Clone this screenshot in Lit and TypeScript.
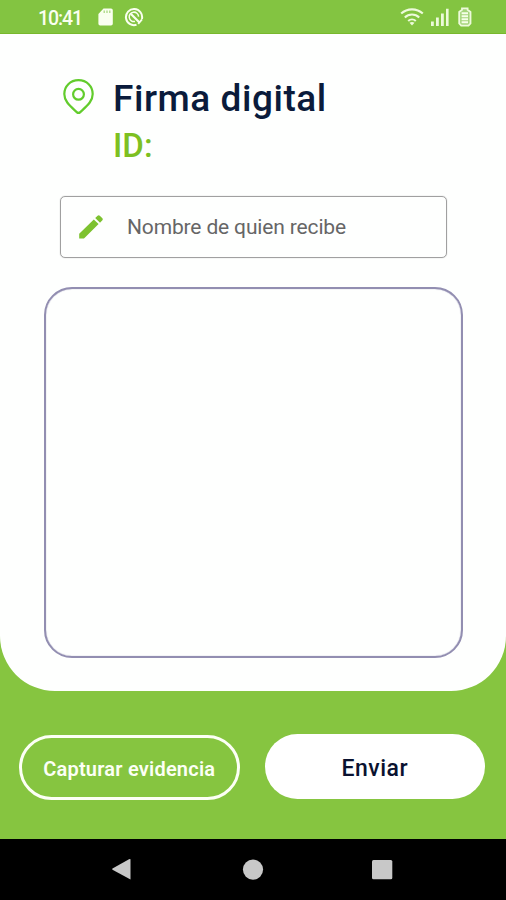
import { LitElement, html, css, svg } from "lit";
import { customElement } from "lit/decorators.js";

@customElement("status-bar")
class StatusBar extends LitElement {
  static styles = css`
    :host { display: flex; align-items: center; justify-content: space-between; box-sizing: border-box; height: 34px; padding: 1px 34px 0 38px; background: #83c441; border-bottom: 1px solid #78b82c; color: #fafff0; }
    .left, .right { display: flex; align-items: center; }
    .clock { font: 500 19.5px/24px Roboto, sans-serif; letter-spacing: -1.1px; width: 59px; margin-top: 3px; }
    svg { display: block; }
    .lens { margin-left: 10px; }
    .signal { margin-left: 7px; }
    .battery { margin-left: 9px; }
  `;
  render() {
    return html`
      <div class="left">
        <span class="clock">10:41</span>
        <svg width="17" height="20" viewBox="0 0 17 20">
          <path d="M6.5 1.5H14a1.8 1.8 0 0 1 1.8 1.8v13.4a1.8 1.8 0 0 1-1.8 1.8H3.2a1.8 1.8 0 0 1-1.8-1.8V7z" fill="#fafff0"/>
          <path d="M7.2 3.6v2.5M10 3.6v2.5M12.8 3.6v2.5" stroke="#a5d57b" stroke-width="1.2"/>
        </svg>
        <svg class="lens" width="20" height="20" viewBox="0 0 20 20" fill="none" stroke="#fafff0">
          <path d="M12.5 17.8A8.1 8.1 0 1 1 17.9 12" stroke-width="2"/>
          <path d="M11 14.4A4.7 4.7 0 1 1 14.6 9.6" stroke-width="1.5"/>
          <path d="M7 7l8.5 8.5" stroke-width="2.2"/>
          <path d="M18 12.4l-3.8 4.4" stroke-width="1.8"/>
        </svg>
      </div>
      <div class="right">
        <svg width="24" height="20" viewBox="0 0 24 20" fill="none" stroke="#edfadb" stroke-width="2.1">
          <path d="M1.2 6.6C7.2 0.9 16.8 0.9 22.8 6.6M4.8 10.4c4-3.8 10.4-3.8 14.4 0M8.2 14c2.2-2 5.4-2 7.6 0"/>
          <path d="M9.5 15.8L12 18.4l2.5-2.6q-2.5-1.7-5 0z" fill="#edfadb" stroke="none"/>
        </svg>
        <svg class="signal" width="18" height="20" viewBox="0 0 18 20" fill="#edfadb">
          <path d="M0 14.5h2.8V19H0zM5 10.5h2.8V19H5zM10 6.5h2.8V19H10zM15 1.8h2.6V19H15z"/>
        </svg>
        <svg class="battery" width="14" height="20" viewBox="0 0 14 20">
          <path d="M4 2.8V1.4h5.6v1.4L12.5 5v11.5l-2 2.2H3.2l-2-2.2V5z" fill="#a5d57b" stroke="#edfadb" stroke-width="1.8"/>
          <path d="M3.6 6.2H10M3.6 9.2H10M3.6 12.2H10M3.6 15.2H10" stroke="#f6ffe8" stroke-width="1.9"/>
        </svg>
      </div>`;
  }
}

@customElement("nav-bar")
class NavBar extends LitElement {
  static styles = css`
    :host { display: flex; height: 61px; box-sizing: border-box; padding: 19px 112px 0 111px; justify-content: space-between; background: #000; }
    svg { display: block; }
  `;
  render() {
    const shapes = [
      svg`<path d="M19.5 1.2v20.2L1.5 11.8q-.8-.6 0-1.2L18 1.2q.9-.5 1.5 0z"/>`,
      svg`<circle cx="12" cy="11.6" r="10.1"/>`,
      svg`<rect x="1" y="2" width="20.3" height="19.3" rx="1.5"/>`,
    ];
    return shapes.map((s) => html`<svg width="23" height="23" viewBox="0 0 23 23" fill="#c8c8c8">${s}</svg>`);
  }
}

@customElement("app-root")
class AppRoot extends LitElement {
  static styles = css`
    :host { display: flex; flex-direction: column; width: 506px; height: 900px; overflow: hidden; background: #86c540; font-family: Roboto, sans-serif; }
    .sheet { height: 657px; box-sizing: border-box; padding: 43px 43px 0 44px; background: #fefffe; border-radius: 0 0 55px 55px; }
    .heading { display: flex; height: 119px; padding-left: 18px; }
    .pin { display: block; margin-top: 1px; }
    .titles { margin-left: 17px; }
    .title { margin: 0; padding-top: 1px; font-size: 37px; line-height: 42px; font-weight: 500; color: #0a1b3b; letter-spacing: 0.55px; white-space: nowrap; }
    .ident { font-size: 33px; line-height: 40px; margin-top: 6px; font-weight: 500; color: #7dc021; letter-spacing: 0; }
    .field { display: flex; align-items: center; box-sizing: border-box; width: 387px; height: 62px; margin-left: 16px; border: 1px solid #a0a0a0; box-shadow: 0 0 1px #a0a0a0; border-radius: 5px; padding-left: 17px; }
    .label { margin-left: 23px; font-size: 21px; color: #666; letter-spacing: -0.15px; white-space: nowrap; }
    .canvas { box-sizing: border-box; height: 371px; margin-top: 29px; border: 2px solid #928eb1; box-shadow: inset 0 0 1px #928eb1; border-radius: 28px; }
    .actions { display: flex; justify-content: space-between; height: 148px; box-sizing: border-box; padding: 43px 21px 0 19px; }
    .btn { box-sizing: border-box; width: 220.5px; height: 65px; border: 0; padding: 0; border-radius: 33px; font-family: inherit; white-space: nowrap; }
    .outline { margin-top: 1px; padding-top: 3px; border: 3px solid #fcfff5; background: transparent; color: #fcfff5; font-size: 20px; font-weight: 600; letter-spacing: 0.22px; }
    .solid { background: #fff; padding-top: 3px; color: #0a1230; font-size: 23px; font-weight: 500; letter-spacing: 0.5px; }
  `;
  render() {
    return html`
      <status-bar></status-bar>
      <main class="sheet">
        <header class="heading">
          <svg class="pin" width="34" height="38" viewBox="0 0 34 38" fill="none" stroke="#62cc2c" stroke-width="2.2">
            <path d="M16.5 2.2C8.2 2.2 2.3 8.2 2.3 16c0 7.2 5.4 11.5 12.4 18.1q1.8 1.7 3.6 0C25.3 27.5 30.7 23.2 30.7 16 30.7 8.2 24.8 2.2 16.5 2.2z"/>
            <circle cx="16.5" cy="16.3" r="5.4"/>
          </svg>
          <div class="titles">
            <h1 class="title">Firma digital</h1>
            <div class="ident">ID:</div>
          </div>
        </header>
        <div class="field">
          <svg width="26" height="26" viewBox="0 0 26 26" fill="#7dc22f">
            <path d="M1.2 19.8L15.8 5.4l4.8 4.6L6 24.5H1.2zM17.2 4.1l2.4-2.4q1.1-.9 2.2 0l2.6 2.5q.9 1 0 2l-2.4 2.5z"/>
          </svg>
          <span class="label">Nombre de quien recibe</span>
        </div>
        <div class="canvas"></div>
      </main>
      <div class="actions">
        <button class="btn outline">Capturar evidencia</button>
        <button class="btn solid">Enviar</button>
      </div>
      <nav-bar></nav-bar>`;
  }
}
